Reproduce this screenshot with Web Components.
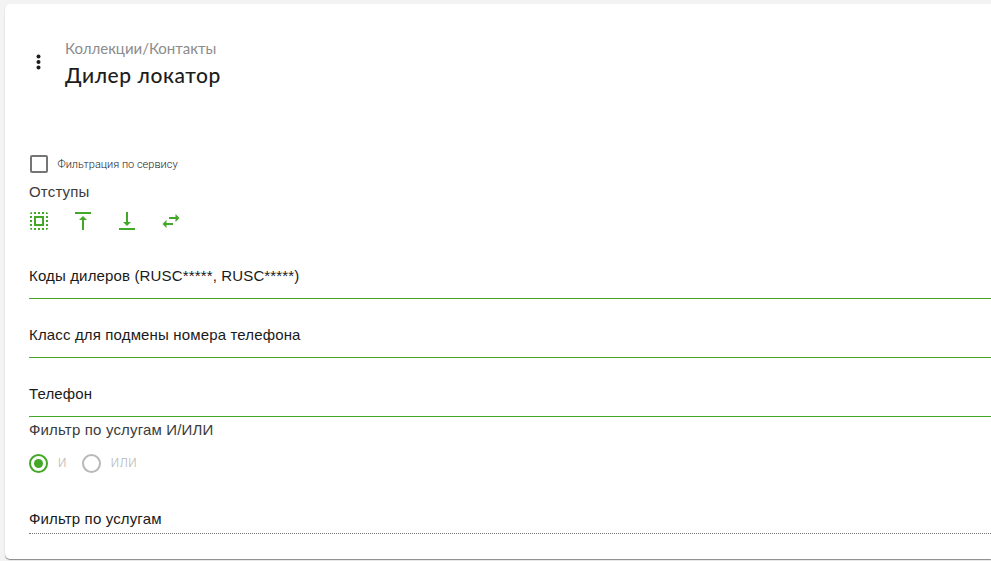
<!DOCTYPE html>
<html lang="ru"><head><meta charset="utf-8"><title>Дилер локатор</title>
<style>html,body{margin:0;height:561px;overflow:hidden;background:#f3f3f3}</style></head>
<body><settings-page></settings-page>
<script>
const define=(name,html)=>customElements.define(name,class extends HTMLElement{
  constructor(){super();this.attachShadow({mode:'open'}).innerHTML=html;}
});
define('page-heading',`<style>
:host{display:flex;height:149px;box-sizing:border-box;padding-top:34px}
svg{width:24px;height:24px;margin:12px 15px 0 -3px}
.crumb{font:15px/20px Lato,sans-serif;color:#8c8c8c;letter-spacing:-.02px;white-space:nowrap}
.title{font:500 21px/30px Lato,sans-serif;color:#1d1d1d;margin-top:2px;letter-spacing:.56px;white-space:nowrap}
</style><svg viewBox="0 0 24 24" fill="#1c1c1c"><circle cx="12.5" cy="6.5" r="2"/><circle cx="12.5" cy="12" r="2"/><circle cx="12.5" cy="17.5" r="2"/></svg>
<div><div class="crumb"><slot name="crumb"></slot></div><div class="title"><slot></slot></div></div>`);
define('check-option',`<style>
:host{display:flex;height:22px;align-items:center;font:300 11px/20px Roboto,sans-serif;color:#222}
i{width:14px;height:14px;border:2px solid #757575;border-radius:2px;margin:0 10px 0 .5px}
span{padding-top:2px}
</style><i></i><span><slot></slot></span>`);
define('group-label',`<style>
:host{display:block;height:24px;font:15px/24px "Liberation Sans",sans-serif;color:#3b3b3b;letter-spacing:.17px}
</style><slot></slot>`);
define('spacing-tools',`<style>
:host{display:flex;height:24px;gap:20px;margin:5px 0 0 -2.5px}
svg{width:24px;height:24px;fill:#43a728}
</style>
<svg viewBox="0 0 24 24"><path d="M3 5h2V3c-1.1 0-2 .9-2 2zm0 8h2v-2H3v2zm4 8h2v-2H7v2zM3 9h2V7H3v2zm10-6h-2v2h2V3zm6 0v2h2c0-1.1-.9-2-2-2zM5 21v-2H3c0 1.1.9 2 2 2zm-2-4h2v-2H3v2zM9 3H7v2h2V3zm2 18h2v-2h-2v2zm8-8h2v-2h-2v2zm0 8c1.1 0 2-.9 2-2h-2v2zm0-12h2V7h-2v2zm0 8h2v-2h-2v2zm-4 4h2v-2h-2v2zm0-16h2V3h-2v2zM7 17h10V7H7v10zm2-8h6v6H9V9z"/></svg>
<svg viewBox="0 0 24 24"><path d="M8 11h3v10h2V11h3l-4-4-4 4zM4 3v2h16V3H4z"/></svg>
<svg viewBox="0 0 24 24"><path d="M16 13h-3V3h-2v10H8l4 4 4-4zM4 19v2h16v-2H4z"/></svg>
<svg viewBox="0 0 24 24"><path d="M7.5 11 3.5 15l4 4v-3H14v-2H7.5v-3zM20.5 9l-4-4v3H10v2h6.5v3l4-4z"/></svg>`);
define('text-field',`<style>
:host{display:block;box-sizing:border-box;height:59px;border-bottom:1px solid #43a728;padding-top:24px;font:15px/24px "Liberation Sans",sans-serif;color:#1a1a1a;letter-spacing:.15px}
:host([muted]){border-bottom:1px dotted #777}
</style><slot></slot>`);
define('radio-option',`<style>
:host{display:flex;align-items:center;font:300 11px/20px Inter,sans-serif;color:#b5b5b5;letter-spacing:.4px}
i{width:15px;height:15px;border:2px solid #b8b8b8;border-radius:50%;margin-right:10px;display:grid;place-items:center}
:host([checked]) i{border-color:#43a728}
:host([checked]) i:after{content:"";width:9px;height:9px;border-radius:50%;background:#43a728}
</style><i></i><span><slot></slot></span>`);
define('radio-row',`<style>:host{display:flex;gap:15px;height:24px;margin-top:9px}</style><slot></slot>`);
define('settings-page',`<style>
:host{display:block;padding:4px 0 0 5px}
main{height:555px;box-sizing:border-box;padding-left:24px;background:#fff;border-radius:5px 0 0 5px;box-shadow:0 1px 1px #888}
.last{height:51px}
</style><main>
<page-heading><span slot="crumb">Коллекции/Контакты</span>Дилер локатор</page-heading>
<check-option>Фильтрация по сервису</check-option>
<group-label style="margin-top:5px">Отступы</group-label>
<spacing-tools></spacing-tools>
<text-field style="margin-top:7px">Коды дилеров (RUSC*****, RUSC*****)</text-field>
<text-field>Класс для подмены номера телефона</text-field>
<text-field>Телефон</text-field>
<group-label style="margin-top:1px">Фильтр по услугам И/ИЛИ</group-label>
<radio-row><radio-option checked>И</radio-option><radio-option>ИЛИ</radio-option></radio-row>
<text-field muted class="last" style="margin-top:8px">Фильтр по услугам</text-field>
</main>`);
</script></body></html>
